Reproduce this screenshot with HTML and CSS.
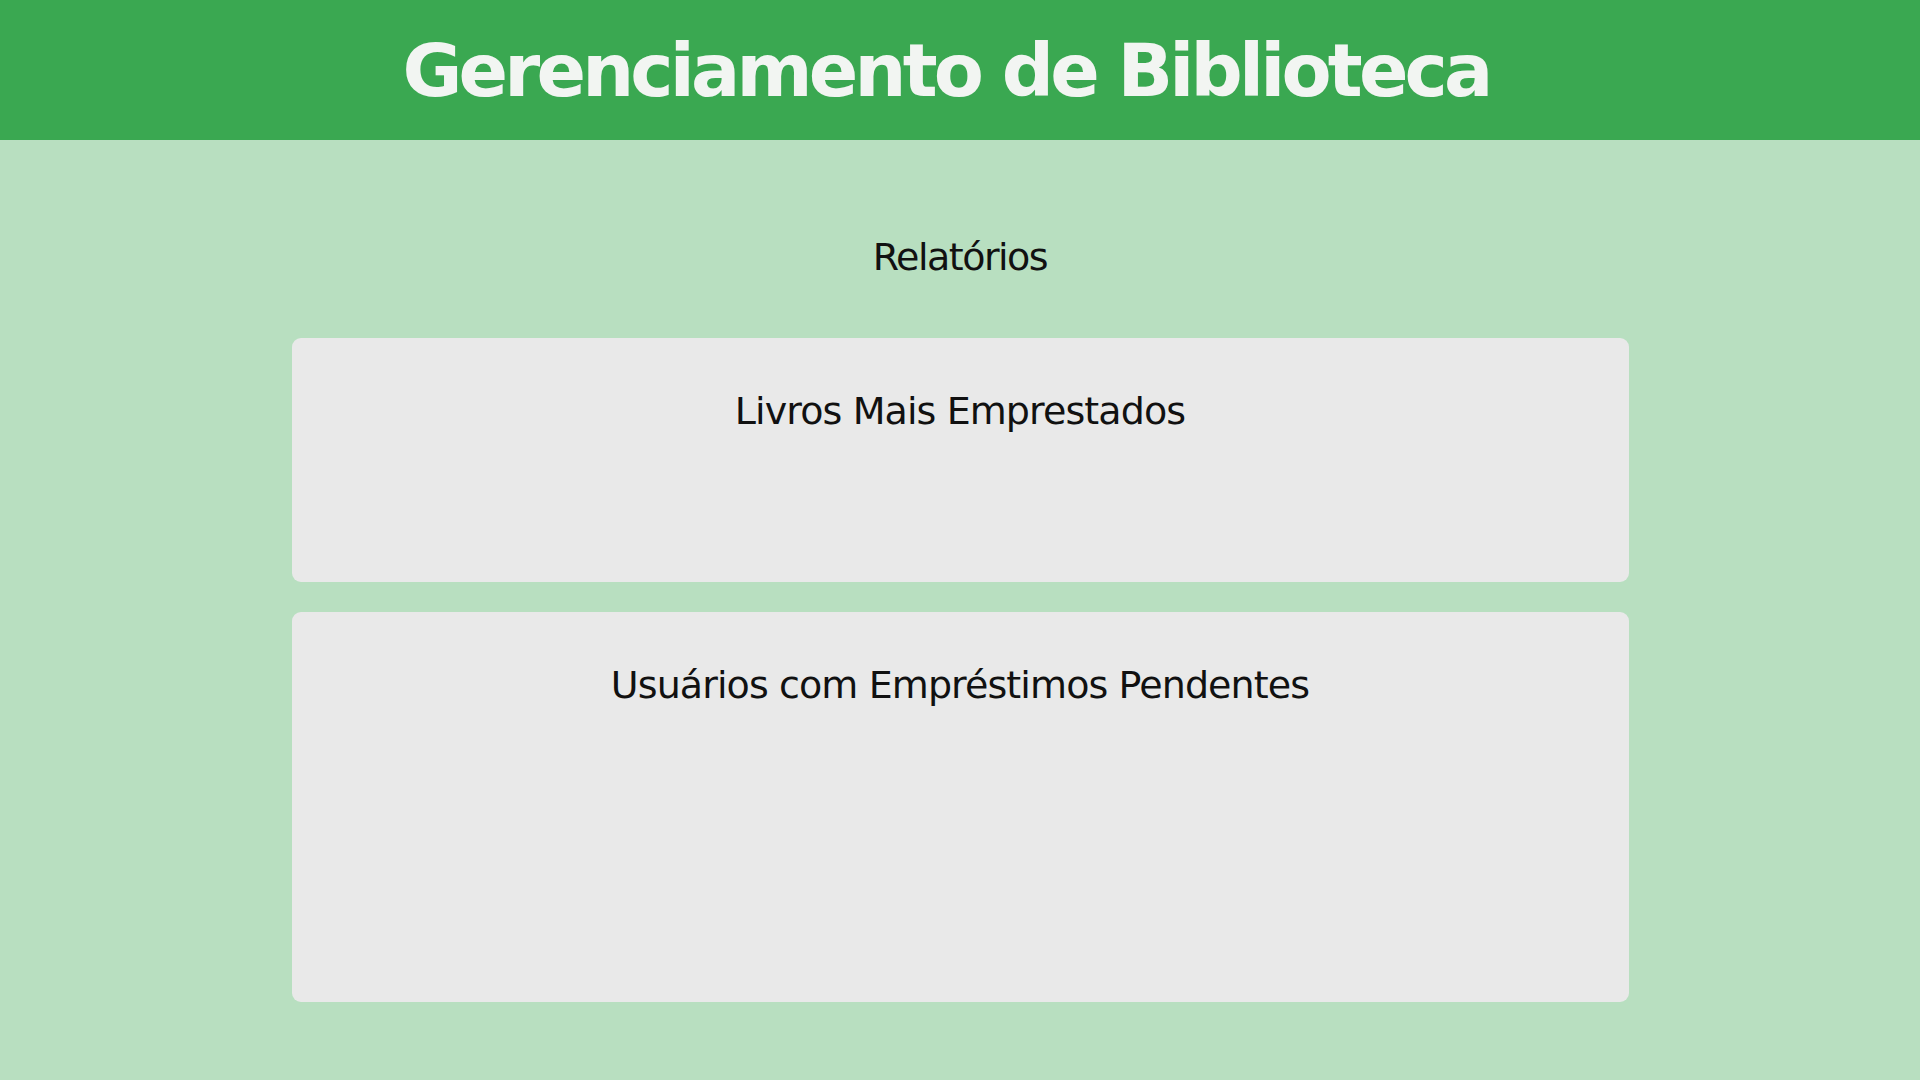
FILE: index.html
```html
<!DOCTYPE html>
<html lang="pt-BR">
<head>
<meta charset="utf-8">
<title>Gerenciamento de Biblioteca</title>
<link rel="stylesheet" href="styles.css">
</head>
<body>
<header class="topbar">
  <h1 class="title">Gerenciamento de Biblioteca</h1>
</header>
<main class="content">
  <h2 class="section-title">Relatórios</h2>
  <section class="card card-short">
    <h3 class="card-title">Livros Mais Emprestados</h3>
  </section>
  <section class="card card-tall">
    <h3 class="card-title">Usuários com Empréstimos Pendentes</h3>
  </section>
</main>
</body>
</html>
```

FILE: styles.css
```css
html, body {
  margin: 0;
  padding: 0;
}
body {
  background: #b8dfc0;
  font-family: "DejaVu Sans", "Noto Sans", sans-serif;
  color: #111;
  min-height: 1080px;
}
.topbar {
  background: #3aa851;
  height: 140px;
  display: flex;
  align-items: center;
  justify-content: center;
  padding-right: 28px;
}
.title {
  margin: 0;
  color: #f2f5f2;
  font-size: 73px;
  font-weight: bold;
  letter-spacing: -3.8px;
  line-height: 1;
}
.content {
  display: flex;
  flex-direction: column;
  align-items: center;
  padding-top: 94px;
}
.section-title {
  margin: 0 0 58px;
  font-size: 38px;
  font-weight: normal;
  letter-spacing: -1.5px;
  line-height: 46px;
}
.card {
  width: 1337px;
  background: #e9e9e9;
  border-radius: 9px;
  box-sizing: border-box;
  padding-top: 50px;
}
.card-short {
  height: 244px;
  margin-bottom: 30px;
}
.card-tall {
  height: 390px;
}
.card-title {
  margin: 0;
  text-align: center;
  font-size: 38px;
  font-weight: normal;
  letter-spacing: -0.9px;
  line-height: 46px;
}
```
